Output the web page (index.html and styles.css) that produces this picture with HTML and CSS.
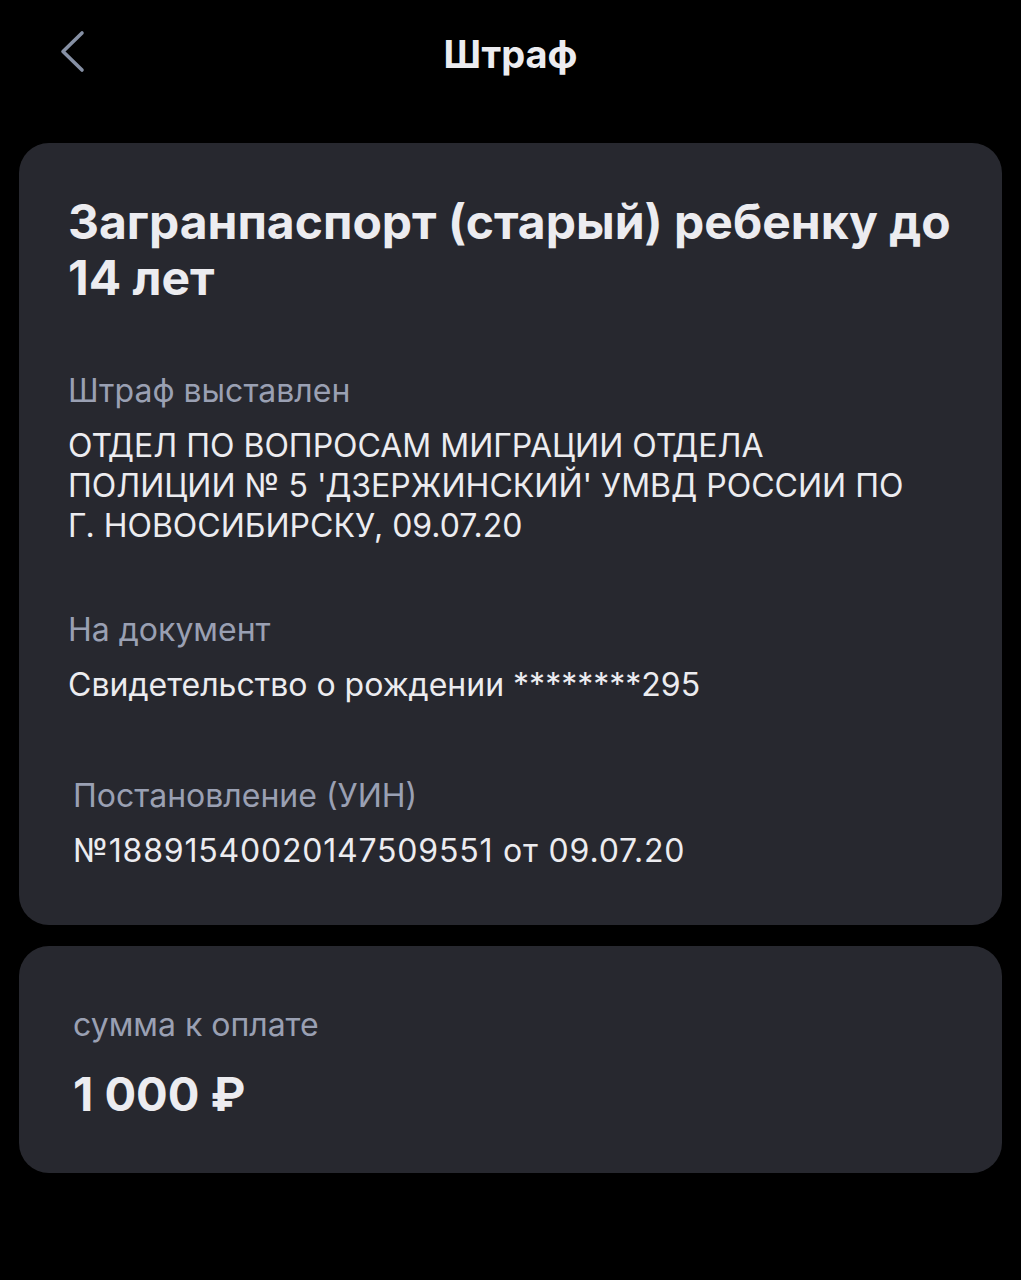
FILE: index.html
```html
<!DOCTYPE html>
<html lang="ru">

<head>
    <meta charset="UTF-8">
    <meta name="viewport" content="width=device-width, initial-scale=1.0">
    <title>Штраф</title>
    <link rel="stylesheet" href="styles.css">
</head>

<body>
    <div class="header">
        <div class="backBtn">
            <svg width="30" height="44" viewBox="0 0 30 44">
                <path d="M23 3 L4 21.5 L23 40" fill="none" stroke="#8690a4" stroke-width="3.6" stroke-linecap="round" stroke-linejoin="round" />
            </svg>
        </div>
        <div class="title">Штраф</div>
    </div>

    <div class="card info">
        <h1 class="cardTitle">Загранпаспорт (старый) ребенку до 14 лет</h1>

        <div class="field">
            <div class="label">Штраф выставлен</div>
            <div class="value">ОТДЕЛ ПО ВОПРОСАМ МИГРАЦИИ ОТДЕЛА ПОЛИЦИИ № 5 'ДЗЕРЖИНСКИЙ' УМВД РОССИИ ПО Г. НОВОСИБИРСКУ, 09.07.20</div>
        </div>

        <div class="field">
            <div class="label">На документ</div>
            <div class="value">Свидетельство о рождении ********295</div>
        </div>

        <div class="field shifted">
            <div class="label">Постановление (УИН)</div>
            <div class="value uin">№18891540020147509551 от 09.07.20</div>
        </div>
    </div>

    <div class="card sum">
        <div class="label">сумма к оплате</div>
        <div class="amount">1 000 ₽</div>
    </div>
</body>

</html>
```

FILE: styles.css
```css
* {
    padding: 0px;
    margin: 0px;
    box-sizing: border-box;
}

body {
    background-color: #000;
    color: #ececf0;
    font-family: Inter, "Noto Sans", sans-serif;
    padding: 0px 19px;
}

.header {
    position: relative;
    height: 143px;
}

.header .backBtn {
    position: absolute;
    left: 40px;
    top: 30px;
    width: 30px;
    height: 44px;
}

.header .title {
    padding-top: 31px;
    text-align: center;
    font-size: 38px;
    font-weight: 700;
    line-height: 46px;
}

.card {
    background-color: #27282f;
    border-radius: 30px;
    padding: 51px 40px 54px 49px;
}

.card .cardTitle {
    font-size: 48px;
    font-weight: 700;
    line-height: 56px;
    margin-bottom: 65px;
}

.label {
    color: #9aa0b3;
    font-size: 32px;
    line-height: 40px;
}

.value {
    max-width: 862px;
    font-size: 32px;
    line-height: 40px;
    margin-top: 15px;
}

/* цифры в SF шире, чем в Inter */
.value.uin {
    letter-spacing: 0.8px;
}

.field {
    margin-bottom: 64px;
}

.field:last-child {
    margin-bottom: 0px;
}

.field.shifted {
    padding-left: 5px;
    margin-top: 71px;
}

.card.sum {
    margin-top: 21px;
    padding: 59px 54px 51px;
}

.card .amount {
    margin-top: 21px;
    font-size: 47px;
    font-weight: 700;
    line-height: 56px;
}
```
